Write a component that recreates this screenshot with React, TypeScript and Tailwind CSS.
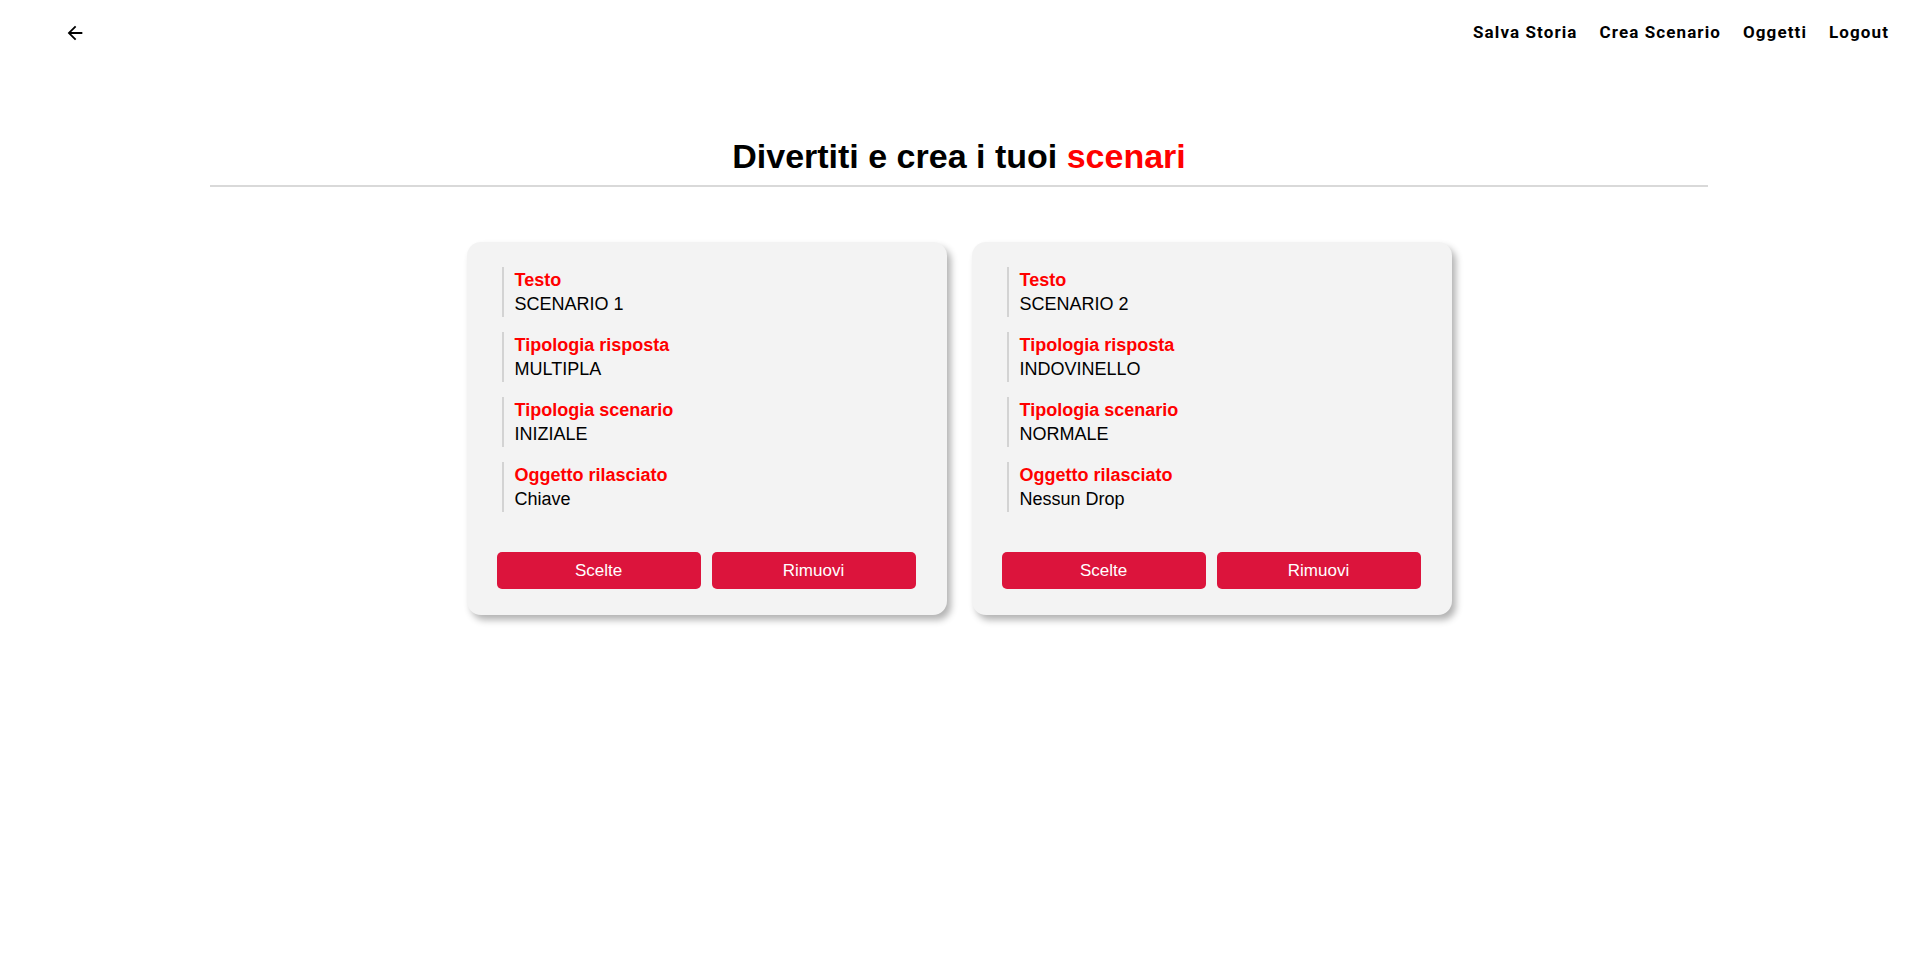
import React from "react";

const cards = [
  {
    items: [
      ["Testo", "SCENARIO 1"],
      ["Tipologia risposta", "MULTIPLA"],
      ["Tipologia scenario", "INIZIALE"],
      ["Oggetto rilasciato", "Chiave"],
    ],
  },
  {
    items: [
      ["Testo", "SCENARIO 2"],
      ["Tipologia risposta", "INDOVINELLO"],
      ["Tipologia scenario", "NORMALE"],
      ["Oggetto rilasciato", "Nessun Drop"],
    ],
  },
];

function Card({ items }: { items: string[][] }) {
  return (
    <div className="w-[480px] h-[373px] bg-[#f3f3f3] rounded-[14px] shadow-[4px_5px_7px_rgba(0,0,0,0.3)] pt-[25px] px-[30px] pb-[26px] flex flex-col">
      <div className="flex flex-col gap-[15px] pl-[5px]">
        {items.map(([label, value]) => (
          <div key={label} className="border-l-2 border-[#d3d3d3] pl-[11px] h-[50px] flex flex-col justify-center">
            <div className="text-[18px] leading-[24px] font-bold text-[#ff0000]">{label}</div>
            <div className="text-[18px] leading-[24px] text-black">{value}</div>
          </div>
        ))}
      </div>
      <div className="mt-auto flex gap-[11px] pr-[1px]">
        <button className="w-[204px] h-[37px] rounded-[5px] bg-[#dc143c] text-white text-[17px]">Scelte</button>
        <button className="w-[204px] h-[37px] rounded-[5px] bg-[#dc143c] text-white text-[17px]">Rimuovi</button>
      </div>
    </div>
  );
}

export default function App() {
  return (
    <div className="min-h-[967px] bg-white font-['Liberation_Sans',Arial,sans-serif]">
      <header className="h-[66px] flex items-center justify-between pl-[64px] pr-[29px]">
        <button className="w-[22px] h-[22px] flex items-center justify-center" aria-label="back">
          <svg width="22" height="22" viewBox="0 0 24 24" fill="#000">
            <path d="M20 11H7.83l5.59-5.59L12 4l-8 8 8 8 1.41-1.41L7.83 13H20v-2z" />
          </svg>
        </button>
        <nav className="flex gap-[22px] font-['Roboto',sans-serif] font-bold text-[17px] tracking-[1.1px] text-black">
          <span>Salva Storia</span>
          <span>Crea Scenario</span>
          <span>Oggetti</span>
          <span>Logout</span>
        </nav>
      </header>
      <div className="mt-[71px] flex flex-col items-center">
        <h1 className="text-[34px] leading-[39px] font-bold text-black">
          Divertiti e crea i tuoi <span className="text-[#ff0000]">scenari</span>
        </h1>
        <div className="mt-[9px] w-[1498px] h-[2px] bg-[#d9d9d9]" />
      </div>
      <div className="mt-[55px] flex justify-center gap-[25px]">
        {cards.map((c, i) => (
          <Card key={i} items={c.items} />
        ))}
      </div>
    </div>
  );
}
